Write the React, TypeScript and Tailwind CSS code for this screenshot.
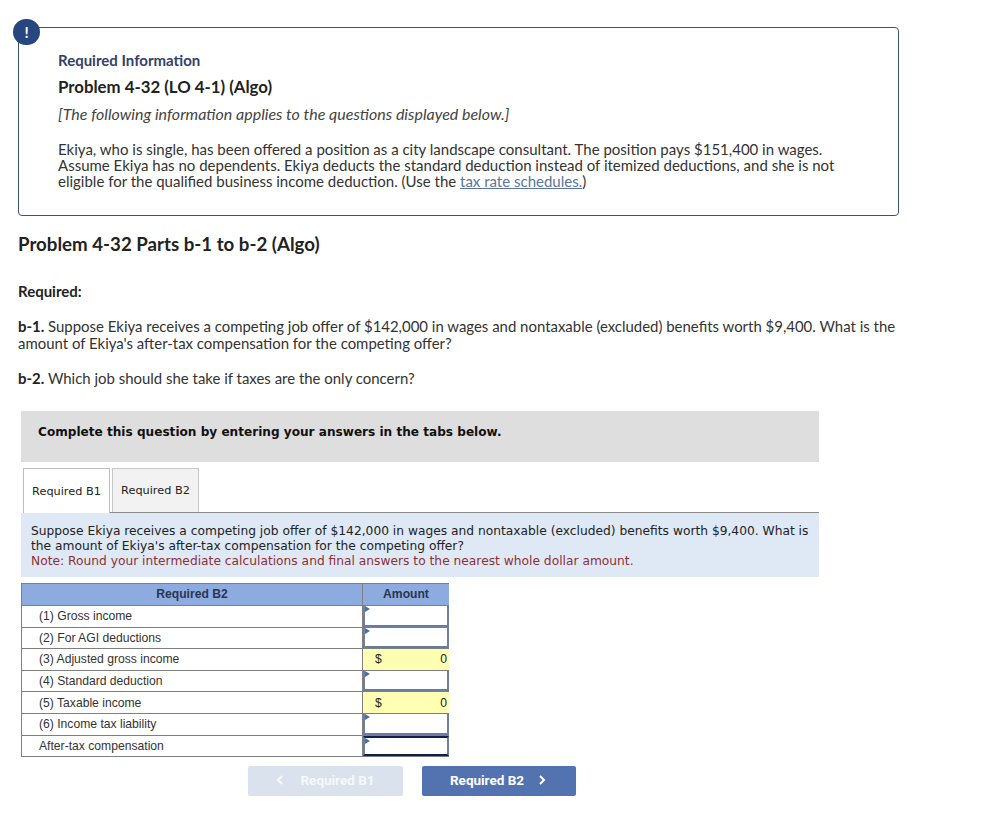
import React from 'react';

const sans = "font-['Lato','Open_Sans',sans-serif]";
const verdana = "font-['DejaVu_Sans',sans-serif]";
const arial = "font-['Liberation_Sans',Arial,sans-serif]";

interface Row {
  label: string;
  calc?: boolean;
  dark?: boolean;
}

const rows: Row[] = [
  { label: '(1) Gross income' },
  { label: '(2) For AGI deductions' },
  { label: '(3) Adjusted gross income', calc: true },
  { label: '(4) Standard deduction' },
  { label: '(5) Taxable income', calc: true },
  { label: '(6) Income tax liability' },
  { label: 'After-tax compensation', dark: true },
];

const TableRow: React.FC<{ row: Row }> = ({ row }) => (
  <div className="flex h-[21.6px] border-b border-[#7f7f7f]">
    <div className="w-[341px] border-r border-[#7f7f7f] pl-[17px] flex items-center text-[12.15px] text-[#333]">
      {row.label}
    </div>
    {row.calc ? (
      <div className="w-[86px] bg-[#ffffb3] flex items-center justify-between pl-[12px] pr-[2px] text-[12.15px] text-[#222]">
        <span>$</span>
        <span>0</span>
      </div>
    ) : (
      <div
        className={`relative w-[86px] bg-white border-x-2 border-[#6f7f9f] border-b-2 ${
          row.dark ? 'border-b-[#10204a] border-t-2 border-t-[#10204a]' : 'border-b-[#6a7ca0]'
        }`}
      >
        <div className="absolute left-0 top-0 w-0 h-0 border-y-[3px] border-y-transparent border-l-[5px] border-l-[#4a6fb0]" />
      </div>
    )}
  </div>
);

export default function App() {
  return (
    <div className={`relative w-[983px] h-[814px] bg-white overflow-hidden pt-[27px] pl-[18px] ${sans}`}>
      {/* Alert badge */}
      <div className="absolute left-[13px] top-[19px] w-[27px] h-[26px] rounded-full bg-[#27457f] text-white flex items-center justify-center text-[15px] font-bold">
        !
      </div>

      {/* Required information */}
      <div className="w-[881px] h-[189px] border border-[#3b5573] rounded-[4px] pl-[39px] pt-[22px]">
        <div className="text-[15px] leading-[20px] font-bold text-[#34406b]">Required Information</div>
        <div className="mt-[7px] text-[16.8px] leading-[20px] font-bold text-[#222]">Problem 4-32 (LO 4-1) (Algo)</div>
        <div className="mt-[7px] text-[16px] leading-[20px] italic text-[#444]">
          [The following information applies to the questions displayed below.]
        </div>
        <div className="mt-[17px] w-[820px] text-[15px] leading-[16px] text-[#333]">
          Ekiya, who is single, has been offered a position as a city landscape consultant. The position pays $151,400 in wages.
          <br />
          Assume Ekiya has no dependents. Ekiya deducts the standard deduction instead of itemized deductions, and she is not
          <br />
          eligible for the qualified business income deduction. (Use the{' '}
          <span className="text-[#5a759f] underline">tax rate schedules.</span>)
        </div>
      </div>

      <h2 className="mt-[16px] text-[18.7px] leading-[24px] font-bold text-[#222]">Problem 4-32 Parts b-1 to b-2 (Algo)</h2>

      <div className="mt-[25px] text-[15px] leading-[20px] font-bold text-[#222]">Required:</div>
      <p className="mt-[17px] w-[885px] text-[14.95px] leading-[17px] text-[#333]">
        <b className="text-[#222]">b-1.</b> Suppose Ekiya receives a competing job offer of $142,000 in wages and nontaxable (excluded) benefits worth $9,400. What is the
        <br />
        amount of Ekiya's after-tax compensation for the competing offer?
      </p>
      <p className="mt-[18px] text-[14.95px] leading-[17px] text-[#333]">
        <b className="text-[#222]">b-2.</b> Which job should she take if taxes are the only concern?
      </p>

      {/* Question area */}
      <div className={`mt-[24px] ml-[3px] w-[798px] ${verdana}`}>
        <div className="h-[51px] bg-[#dedede] pl-[17px] pt-[13px] text-[12.1px] leading-[17px] font-bold text-[#111]">
          Complete this question by entering your answers in the tabs below.
        </div>

        <div className="mt-[6px] ml-[2px] flex gap-[2px] border-b border-[#8a8a8a] h-[45px]">
          <div className="w-[87px] h-[45px] pt-[2px] bg-white border border-b-0 border-[#bdbdbd] flex items-center justify-center text-[11.3px] text-[#222]">
            Required B1
          </div>
          <div className="w-[87px] h-[44px] pt-[2px] bg-[#f2f2f2] border border-b-0 border-[#c8c8c8] flex items-center justify-center text-[11.3px] text-[#222]">
            Required B2
          </div>
        </div>

        <div className="h-[64px] bg-[#dfe9f6] pl-[10px] pt-[11px] text-[12.25px] leading-[15px] text-[#222]">
          Suppose Ekiya receives a competing job offer of $142,000 in wages and nontaxable (excluded) benefits worth $9,400. What is
          <br />
          the amount of Ekiya's after-tax compensation for the competing offer?
          <br />
          <span className="text-[#8f2f35]">Note: Round your intermediate calculations and final answers to the nearest whole dollar amount.</span>
        </div>
      </div>

      {/* Answer table */}
      <div className={`mt-[6px] ml-[3px] w-[428px] border-t border-l border-[#7f7f7f] ${arial}`}>
        <div className="flex h-[22px] bg-[#8dabdf] border-b border-[#7f7f7f] text-[12.15px] font-bold text-[#2a3550]">
          <div className="w-[341px] border-r border-[#7f7f7f] flex items-center justify-center">Required B2</div>
          <div className="w-[86px] flex items-center justify-center">Amount</div>
        </div>
        {rows.map(row => (
          <TableRow key={row.label} row={row} />
        ))}
      </div>

      {/* Prev / next */}
      <div className="mt-[9px] ml-[230px] flex gap-[19px] text-[13.5px] font-bold text-white font-['Roboto',sans-serif]">
        <div className="w-[155px] h-[30px] pb-[2px] rounded-[2px] bg-[#dae2ee] flex items-center justify-center gap-[16px] text-[#f6f8fb]">
          <svg width="8" height="10" viewBox="0 0 8 10" fill="none" stroke="currentColor" strokeWidth="2">
            <path d="M6 1 2 5l4 4" />
          </svg>
          <span>Required B1</span>
        </div>
        <div className="w-[154px] h-[30px] pb-[2px] pr-[2px] rounded-[2px] bg-[#5273b0] flex items-center justify-center gap-[14px]">
          <span>Required B2</span>
          <svg width="8" height="10" viewBox="0 0 8 10" fill="none" stroke="currentColor" strokeWidth="2">
            <path d="m2 1 4 4-4 4" />
          </svg>
        </div>
      </div>
    </div>
  );
}
